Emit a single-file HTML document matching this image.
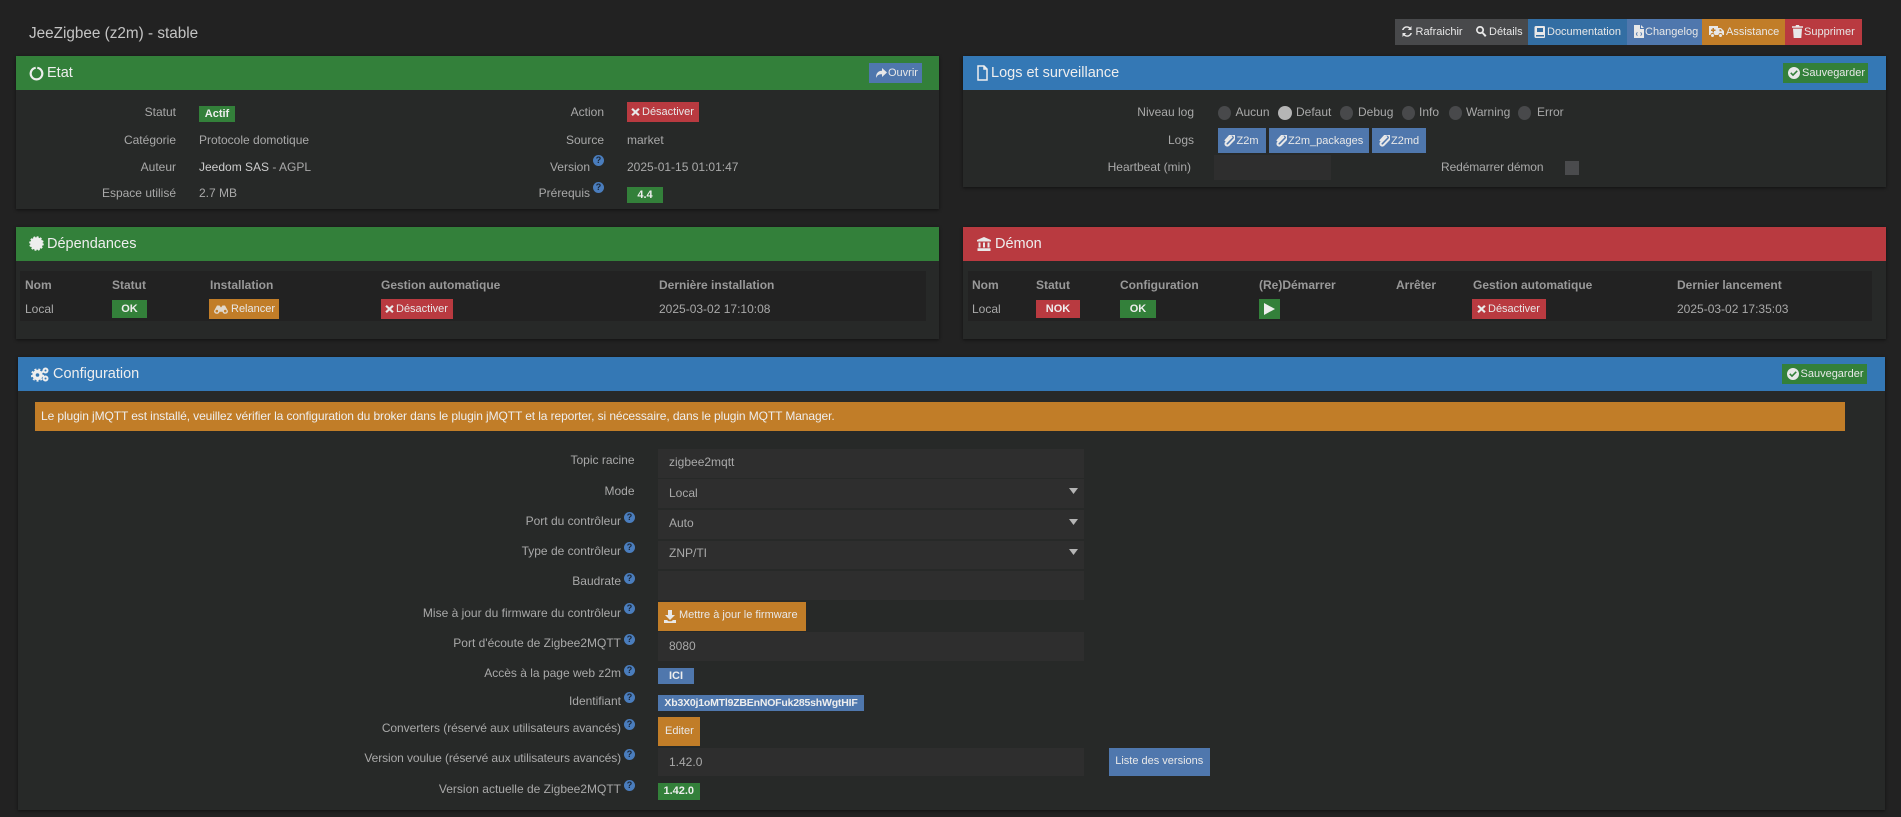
<!DOCTYPE html>
<html lang="fr"><head><meta charset="utf-8"><title>JeeZigbee</title>
<style>
html,body{margin:0;padding:0;width:1901px;height:817px;overflow:hidden;background:#222222}
body{position:relative;font-family:"Liberation Sans",sans-serif;font-size:12px;color:#a9a9a9}
.b,.t,.i{position:absolute}
.b{box-sizing:border-box}
.t{white-space:nowrap;line-height:16px;height:16px}
.w{color:#eee}
.s{font-size:11px;color:#e8e8e8}
.h{font-size:14.5px;color:#eee;line-height:18px;height:18px}
.th{font-weight:bold;color:#999;font-size:12px}
.p{background:#272928;box-shadow:0 1px 3px rgba(0,0,0,.5)}
.inp{background:#2e2e2e}
.c{text-align:center}
.lb{font-weight:bold;font-size:11px;color:#eee;text-align:center;line-height:16px;white-space:nowrap}
.i{fill:#e8e8e8}
.q{position:absolute;width:11px;height:11px;border-radius:50%;background:#4a7dbd;color:#1b2738;font:bold 9px/11px "Liberation Sans",sans-serif;text-align:center}
.f{letter-spacing:-.1px}
</style></head><body>

<div class="t" style="left:29px;top:25px;font-size:15.3px;line-height:18px;height:18px;color:#c4c4c4">JeeZigbee (z2m) - stable</div>

<!-- top buttons -->
<div class="b" style="left:1395px;top:19px;width:133px;height:26px;background:#48494b"></div>
<div class="b" style="left:1528px;top:19px;width:99px;height:26px;background:#336ea3"></div>
<div class="b" style="left:1627px;top:19px;width:75px;height:26px;background:#4f77ad"></div>
<div class="b" style="left:1702px;top:19px;width:83px;height:26px;background:#c17d28"></div>
<div class="b" style="left:1785px;top:19px;width:77px;height:26px;background:#b93a40"></div>
<svg class="i" style="left:1401px;top:25px" width="12" height="13" viewBox="0 0 12 13"><path d="M10.500 1v4H6.800l1.400-1.400A3.400 3.400 0 0 0 2.600 5H1A5 5 0 0 1 9.200 2.500zM1.500 12V8h3.700L3.800 9.400A3.400 3.400 0 0 0 9.400 8H11A5 5 0 0 1 2.800 10.500z"/></svg>
<div class="t s" style="left:1415.500px;top:24px">Rafraichir</div>
<svg class="i" style="left:1475px;top:25px" width="12" height="13" viewBox="0 0 12 13"><path d="M5 1a4 4 0 1 0 2 7.500L10 12l1.500-1.500L8.300 7.300A4 4 0 0 0 5 1zm0 1.700a2.300 2.300 0 1 1 0 4.600 2.300 2.300 0 0 1 0-4.600z" fill-rule="evenodd"/></svg>
<div class="t s" style="left:1489px;top:24px">Détails</div>
<svg class="i" style="left:1534px;top:25px" width="11" height="13" viewBox="0 0 11 13"><path d="M2 1h8a1 1 0 0 1 1 1v10a1 1 0 0 1-1 1H2a1.500 1.500 0 0 1-1.500-1.500v-9A1.500 1.500 0 0 1 2 1zm1 2v4h6V3zM2 10v1.500h8V10z" fill-rule="evenodd"/></svg>
<div class="t s" style="left:1547px;top:24px">Documentation</div>
<svg class="i" style="left:1634px;top:25px" width="10" height="13" viewBox="0 0 10 13"><path d="M0 0h6v4h4v9H0zM7 0l3 3H7zM3 7 1.800 9 3 11l.7-.4L2.900 9l.8-1.600zm4 0-.7.4.8 1.600-.8 1.600.7.4L8.200 9z" fill-rule="evenodd"/></svg>
<div class="t s" style="left:1645px;top:24px">Changelog</div>
<svg class="i" style="left:1709px;top:25px" width="15" height="13" viewBox="0 0 15 13"><path d="M0 1h9v2h3l3 3v4h-1.500a2 2 0 0 0-4 0h-4a2 2 0 0 0-4 0H0zM3.500 3v1.500H2V6h1.500v1.500H5V6h1.500V4.500H5V3zM10.500 4.300v2H13L11.500 4.300zM3.500 9a1.500 1.500 0 1 1 0 3 1.500 1.500 0 0 1 0-3zm8 0a1.500 1.500 0 1 1 0 3 1.500 1.500 0 0 1 0-3z" fill-rule="evenodd"/></svg>
<div class="t s" style="left:1726px;top:24px">Assistance</div>
<svg class="i" style="left:1792px;top:25px" width="11" height="13" viewBox="0 0 11 13"><path d="M4 0h3l.5 1.200H11v1.600H0V1.200h3.500zM1 3.600h9l-.7 9.400H1.700z"/></svg>
<div class="t s" style="left:1804px;top:24px">Supprimer</div>

<!-- Etat -->
<div class="b p" style="left:16px;top:56px;width:923px;height:153px"></div>
<div class="b" style="left:16px;top:56px;width:923px;height:34px;background:#33803a"></div>
<svg class="i" style="left:29px;top:66px;fill:none;stroke:#eee;stroke-width:2.200" width="15" height="15" viewBox="0 0 15 15"><path d="M8.300 1.800A5.800 5.800 0 1 1 6.700 1.800"/></svg>
<div class="t h" style="left:47px;top:64px">Etat</div>
<div class="b" style="left:869px;top:63px;width:53px;height:20px;background:#4f77ad"></div>
<svg class="i" style="left:875px;top:67px" width="12" height="12" viewBox="0 0 12 12"><path d="M7 1l5 4.500L7 10V7.200C4 7.200 2.200 8 1 11 .8 6.500 3 3.800 7 3.700z"/></svg>
<div class="t s" style="left:888px;top:65px">Ouvrir</div>

<div class="t" style="right:1725px;top:104px">Statut</div>
<div class="b lb" style="left:199px;top:106px;width:36px;height:16px;background:#33803a">Actif</div>
<div class="t" style="right:1725px;top:132px">Catégorie</div>
<div class="t" style="left:199px;top:132px">Protocole domotique</div>
<div class="t" style="right:1725px;top:159px">Auteur</div>
<div class="t" style="left:199px;top:159px"><span style="color:#ccc">Jeedom SAS</span> - AGPL</div>
<div class="t" style="right:1725px;top:185px">Espace utilisé</div>
<div class="t" style="left:199px;top:185px">2.7 MB</div>

<div class="t" style="right:1297px;top:104px">Action</div>
<div class="b" style="left:627px;top:102px;width:72px;height:20px;background:#b93a40"></div>
<svg class="i" style="left:631px;top:107px" width="9" height="10" viewBox="0 0 9 10"><path d="M1.800 1 4.500 3.500 7.200 1 8.700 2.500 6 5l2.700 2.500L7.200 9 4.500 6.500 1.800 9 .3 7.500 3 5 .3 2.500z"/></svg>
<div class="t s" style="left:642px;top:104px">Désactiver</div>
<div class="t" style="right:1297px;top:132px">Source</div>
<div class="t" style="left:627px;top:132px">market</div>
<div class="t" style="right:1311px;top:159px">Version</div>
<div class="q" style="left:593px;top:155px">?</div>
<div class="t" style="left:627px;top:159px">2025-01-15 01:01:47</div>
<div class="t" style="right:1311px;top:185px">Prérequis</div>
<div class="q" style="left:593px;top:182px">?</div>
<div class="b lb" style="left:627px;top:187px;width:36px;height:16px;background:#33803a">4.4</div>

<!-- Logs -->
<div class="b p" style="left:963px;top:56px;width:923px;height:131px"></div>
<div class="b" style="left:963px;top:56px;width:923px;height:34px;background:#3478b5"></div>
<svg class="i" style="left:977px;top:65px;fill:none;stroke:#eee;stroke-width:1.500" width="11" height="16" viewBox="0 0 11 16"><path d="M1 1h6l3 3v11H1zM7 1v3h3"/></svg>
<div class="t h" style="left:991px;top:64px">Logs et surveillance</div>
<div class="b" style="left:1783px;top:63px;width:85px;height:20px;background:#33803a"></div>
<svg class="i" style="left:1788px;top:67px" width="12" height="12" viewBox="0 0 12 12"><path d="M6 0a6 6 0 1 1 0 12A6 6 0 0 1 6 0zM5 7 3.300 5.300 2.200 6.400 5 9.200l4.800-4.800-1.100-1.100z" fill-rule="evenodd"/></svg>
<div class="t s" style="left:1802px;top:65px">Sauvegarder</div>

<div class="t" style="right:707px;top:104px">Niveau log</div>
<div class="b" style="left:1218px;top:106px;width:13px;height:14px;border-radius:50%;background:#48494b"></div>
<div class="t" style="left:1235.500px;top:104px">Aucun</div>
<div class="b" style="left:1278px;top:106px;width:14px;height:14px;border-radius:50%;background:#b5b5b5"></div>
<div class="t" style="left:1296px;top:104px">Defaut</div>
<div class="b" style="left:1340px;top:106px;width:13px;height:14px;border-radius:50%;background:#48494b"></div>
<div class="t" style="left:1358px;top:104px">Debug</div>
<div class="b" style="left:1401.500px;top:106px;width:13px;height:14px;border-radius:50%;background:#48494b"></div>
<div class="t" style="left:1419px;top:104px">Info</div>
<div class="b" style="left:1449px;top:106px;width:13px;height:14px;border-radius:50%;background:#48494b"></div>
<div class="t" style="left:1466px;top:104px">Warning</div>
<div class="b" style="left:1518px;top:106px;width:13px;height:14px;border-radius:50%;background:#48494b"></div>
<div class="t" style="left:1537px;top:104px">Error</div>

<div class="t" style="right:707px;top:132px">Logs</div>
<div class="b" style="left:1218px;top:128px;width:48px;height:25px;background:#4f77ad"></div>
<div class="b" style="left:1269px;top:128px;width:100px;height:25px;background:#4f77ad"></div>
<div class="b" style="left:1372px;top:128px;width:54px;height:25px;background:#4f77ad"></div>
<svg class="i" style="left:1224px;top:135px;fill:none;stroke:#e8e8e8;stroke-width:2" width="11" height="12" viewBox="0 0 11 12"><path d="M8 1.500 2 7.500a1.800 1.800 0 0 0 2.600 2.600L10 4.500a2.800 2.800 0 0 0-4-4L1 6"/></svg>
<div class="t s" style="left:1236.500px;top:133px">Z2m</div>
<svg class="i" style="left:1275.500px;top:135px;fill:none;stroke:#e8e8e8;stroke-width:2" width="11" height="12" viewBox="0 0 11 12"><path d="M8 1.500 2 7.500a1.800 1.800 0 0 0 2.600 2.600L10 4.500a2.800 2.800 0 0 0-4-4L1 6"/></svg>
<div class="t s" style="left:1288px;top:133px">Z2m_packages</div>
<svg class="i" style="left:1378.500px;top:135px;fill:none;stroke:#e8e8e8;stroke-width:2" width="11" height="12" viewBox="0 0 11 12"><path d="M8 1.500 2 7.500a1.800 1.800 0 0 0 2.600 2.600L10 4.500a2.800 2.800 0 0 0-4-4L1 6"/></svg>
<div class="t s" style="left:1391px;top:133px">Z2md</div>

<div class="t" style="right:710px;top:159px">Heartbeat (min)</div>
<div class="b inp" style="left:1214px;top:155px;width:117px;height:25px"></div>
<div class="t f" style="left:1441px;top:159px">Redémarrer démon</div>
<div class="b" style="left:1564.500px;top:161px;width:14px;height:14px;background:#4a4b4d"></div>

<!-- Dependances -->
<div class="b p" style="left:16px;top:227px;width:923px;height:112px"></div>
<div class="b" style="left:16px;top:227px;width:923px;height:34px;background:#33803a"></div>
<svg class="i" style="left:29px;top:236px" width="15" height="15" viewBox="0 0 15 15"><circle cx="7.500" cy="7.500" r="6.300" fill="#eee"/><circle cx="7.500" cy="7.500" r="6.300" fill="none" stroke="#eee" stroke-width="2" stroke-dasharray="1.800 1.500"/></svg>
<div class="t h" style="left:47px;top:235px">Dépendances</div>
<div class="b" style="left:20px;top:271px;width:906px;height:50px;background:#222"></div>
<div class="t th" style="left:25px;top:277px">Nom</div>
<div class="t th" style="left:112px;top:277px">Statut</div>
<div class="t th" style="left:210px;top:277px">Installation</div>
<div class="t th" style="left:381px;top:277px">Gestion automatique</div>
<div class="t th" style="left:659px;top:277px">Dernière installation</div>
<div class="t" style="left:25px;top:301px">Local</div>
<div class="b lb" style="left:112px;top:300px;width:35px;height:18px;background:#33803a;line-height:18px">OK</div>
<div class="b" style="left:209px;top:299px;width:70px;height:20px;background:#c17d28"></div>
<svg class="i" style="left:214px;top:304px;fill:#e0d8cc" width="14" height="10" viewBox="0 0 14 10"><path d="M3 1.500h2.500L7 3.500l1.500-2H11L14 7a2.800 2.800 0 0 1-5.500.7H5.500A2.800 2.800 0 0 1 0 7zM2.800 5.800a1.300 1.300 0 1 0 0 2.600 1.300 1.300 0 0 0 0-2.600zm8.400 0a1.300 1.300 0 1 0 0 2.600 1.300 1.300 0 0 0 0-2.600z" fill-rule="evenodd"/></svg>
<div class="t s" style="left:231px;top:301px">Relancer</div>
<div class="b" style="left:381px;top:299px;width:72px;height:20px;background:#b93a40"></div>
<svg class="i" style="left:385px;top:304px" width="9" height="10" viewBox="0 0 9 10"><path d="M1.800 1 4.500 3.500 7.200 1 8.700 2.500 6 5l2.700 2.500L7.200 9 4.500 6.500 1.800 9 .3 7.500 3 5 .3 2.500z"/></svg>
<div class="t s" style="left:396px;top:301px">Désactiver</div>
<div class="t" style="left:659px;top:301px">2025-03-02 17:10:08</div>

<!-- Demon -->
<div class="b p" style="left:963px;top:227px;width:923px;height:112px"></div>
<div class="b" style="left:963px;top:227px;width:923px;height:34px;background:#b93a40"></div>
<svg class="i" style="left:977px;top:237px" width="14" height="14" viewBox="0 0 14 14"><path d="M7 0l7 3v1.500H0V3zM1.500 5.500h2v5h-2zM6 5.500h2v5H6zM10.500 5.500h2v5h-2zM.5 11.300h13V14H.5z"/></svg>
<div class="t h" style="left:995px;top:235px">Démon</div>
<div class="b" style="left:968px;top:271px;width:904px;height:50px;background:#222"></div>
<div class="t th" style="left:972px;top:277px">Nom</div>
<div class="t th" style="left:1036px;top:277px">Statut</div>
<div class="t th" style="left:1120px;top:277px">Configuration</div>
<div class="t th" style="left:1259px;top:277px">(Re)Démarrer</div>
<div class="t th" style="left:1396px;top:277px">Arrêter</div>
<div class="t th" style="left:1473px;top:277px">Gestion automatique</div>
<div class="t th" style="left:1677px;top:277px">Dernier lancement</div>
<div class="t" style="left:972px;top:301px">Local</div>
<div class="b lb" style="left:1036px;top:300px;width:44px;height:18px;background:#b93a40;line-height:18px">NOK</div>
<div class="b lb" style="left:1120px;top:300px;width:36px;height:18px;background:#33803a;line-height:18px">OK</div>
<div class="b" style="left:1258.500px;top:299px;width:21.500px;height:20px;background:#33803a"></div>
<svg class="i" style="left:1264px;top:303px" width="11" height="12" viewBox="0 0 11 12"><path d="M0 0l11 6-11 6z" fill="#eee"/></svg>
<div class="b" style="left:1472px;top:299px;width:74px;height:20px;background:#b93a40"></div>
<svg class="i" style="left:1477px;top:304px" width="9" height="10" viewBox="0 0 9 10"><path d="M1.800 1 4.500 3.500 7.200 1 8.700 2.500 6 5l2.700 2.500L7.200 9 4.500 6.500 1.800 9 .3 7.500 3 5 .3 2.500z"/></svg>
<div class="t s" style="left:1488px;top:301px">Désactiver</div>
<div class="t" style="left:1677px;top:301px">2025-03-02 17:35:03</div>

<!-- Configuration -->
<div class="b p" style="left:18px;top:357px;width:1866.500px;height:453px"></div>
<div class="b" style="left:18px;top:357px;width:1866.500px;height:34px;background:#3478b5"></div>
<svg class="i" style="left:31px;top:367px" width="18" height="15" viewBox="0 0 18 15"><circle cx="6.500" cy="8" r="3.500" fill="none" stroke="#eee" stroke-width="3.400"/><circle cx="6.500" cy="8" r="5.800" fill="none" stroke="#eee" stroke-width="1.600" stroke-dasharray="2 2"/><circle cx="14.500" cy="3.500" r="2" fill="none" stroke="#eee" stroke-width="2"/><circle cx="14.500" cy="11.500" r="2" fill="none" stroke="#eee" stroke-width="2"/></svg>
<div class="t h" style="left:53px;top:365px">Configuration</div>
<div class="b" style="left:1781.500px;top:364px;width:85px;height:20px;background:#33803a"></div>
<svg class="i" style="left:1786.500px;top:368px" width="12" height="12" viewBox="0 0 12 12"><path d="M6 0a6 6 0 1 1 0 12A6 6 0 0 1 6 0zM5 7 3.300 5.300 2.200 6.400 5 9.200l4.800-4.800-1.100-1.100z" fill-rule="evenodd"/></svg>
<div class="t s" style="left:1800.500px;top:366px">Sauvegarder</div>
<div class="b" style="left:35px;top:402px;width:1810px;height:29px;background:#c17d28"></div>
<div class="t" style="left:41px;top:408px;color:#eee;letter-spacing:-.1px">Le plugin jMQTT est installé, veuillez vérifier la configuration du broker dans le plugin jMQTT et la reporter, si nécessaire, dans le plugin MQTT Manager.</div>

<!-- form -->
<div class="t" style="right:1266.500px;top:452px">Topic racine</div>
<div class="b inp" style="left:658px;top:449px;width:426px;height:29px"></div>
<div class="t" style="left:669px;top:454px">zigbee2mqtt</div>

<div class="t" style="right:1266.500px;top:483px">Mode</div>
<div class="b inp" style="left:658px;top:479px;width:426px;height:29px"></div>
<div class="t" style="left:669px;top:485px">Local</div>
<svg class="i" style="left:1069px;top:488px;fill:#b5b5b5" width="9" height="6" viewBox="0 0 9 6"><path d="M0 0h9L4.500 6z"/></svg>

<div class="t" style="right:1280px;top:513px">Port du contrôleur</div>
<div class="q" style="left:624px;top:512px">?</div>
<div class="b inp" style="left:658px;top:510px;width:426px;height:29px"></div>
<div class="t" style="left:669px;top:515px">Auto</div>
<svg class="i" style="left:1069px;top:519px;fill:#b5b5b5" width="9" height="6" viewBox="0 0 9 6"><path d="M0 0h9L4.500 6z"/></svg>

<div class="t" style="right:1280px;top:543px">Type de contrôleur</div>
<div class="q" style="left:624px;top:542px">?</div>
<div class="b inp" style="left:658px;top:541px;width:426px;height:28px"></div>
<div class="t" style="left:669px;top:545px">ZNP/TI</div>
<svg class="i" style="left:1069px;top:549px;fill:#b5b5b5" width="9" height="6" viewBox="0 0 9 6"><path d="M0 0h9L4.500 6z"/></svg>

<div class="t" style="right:1280px;top:573px">Baudrate</div>
<div class="q" style="left:624px;top:573px">?</div>
<div class="b inp" style="left:658px;top:571px;width:426px;height:29px"></div>

<div class="t" style="right:1280px;top:605px">Mise à jour du firmware du contrôleur</div>
<div class="q" style="left:624px;top:603px">?</div>
<div class="b" style="left:658px;top:602px;width:147.500px;height:29px;background:#c17d28"></div>
<svg class="i" style="left:664px;top:610px" width="12" height="13" viewBox="0 0 12 13"><path d="M4 0h4v5h3L6 10 1 5h3zM0 10h3l1.500 1.200h3L9 10h3v3H0z"/></svg>
<div class="t s" style="left:679px;top:607px">Mettre à jour le firmware</div>

<div class="t" style="right:1280px;top:635px">Port d'écoute de Zigbee2MQTT</div>
<div class="q" style="left:624px;top:634px">?</div>
<div class="b inp" style="left:658px;top:632px;width:426px;height:29px"></div>
<div class="t" style="left:669px;top:638px">8080</div>

<div class="t" style="right:1280px;top:665px">Accès à la page web z2m</div>
<div class="q" style="left:624px;top:665px">?</div>
<div class="b lb" style="left:658px;top:668px;width:36px;height:16px;background:#4f77ad">ICI</div>

<div class="t" style="right:1280px;top:693px">Identifiant</div>
<div class="q" style="left:624px;top:692px">?</div>
<div class="b lb" style="left:658px;top:695px;width:206px;height:16px;background:#4f77ad;letter-spacing:-.2px;font-size:10.5px">Xb3X0j1oMTl9ZBEnNOFuk285shWgtHIF</div>

<div class="t" style="right:1280px;top:720px;letter-spacing:-.05px">Converters (réservé aux utilisateurs avancés)</div>
<div class="q" style="left:624px;top:719px">?</div>
<div class="b" style="left:658px;top:717px;width:42px;height:29px;background:#c17d28"></div>
<div class="t s" style="left:665px;top:723px">Editer</div>

<div class="t f" style="right:1280px;top:750px">Version voulue (réservé aux utilisateurs avancés)</div>
<div class="q" style="left:624px;top:749px">?</div>
<div class="b inp" style="left:658px;top:748px;width:426px;height:28px"></div>
<div class="t" style="left:669px;top:754px">1.42.0</div>
<div class="b" style="left:1108.500px;top:748px;width:101.500px;height:28px;background:#4f77ad"></div>
<div class="t s c" style="left:1108.500px;width:101.500px;top:753px">Liste des versions</div>

<div class="t" style="right:1280px;top:781px">Version actuelle de Zigbee2MQTT</div>
<div class="q" style="left:624px;top:780px">?</div>
<div class="b lb" style="left:658px;top:783px;width:41.500px;height:17px;background:#33803a">1.42.0</div>

</body></html>
